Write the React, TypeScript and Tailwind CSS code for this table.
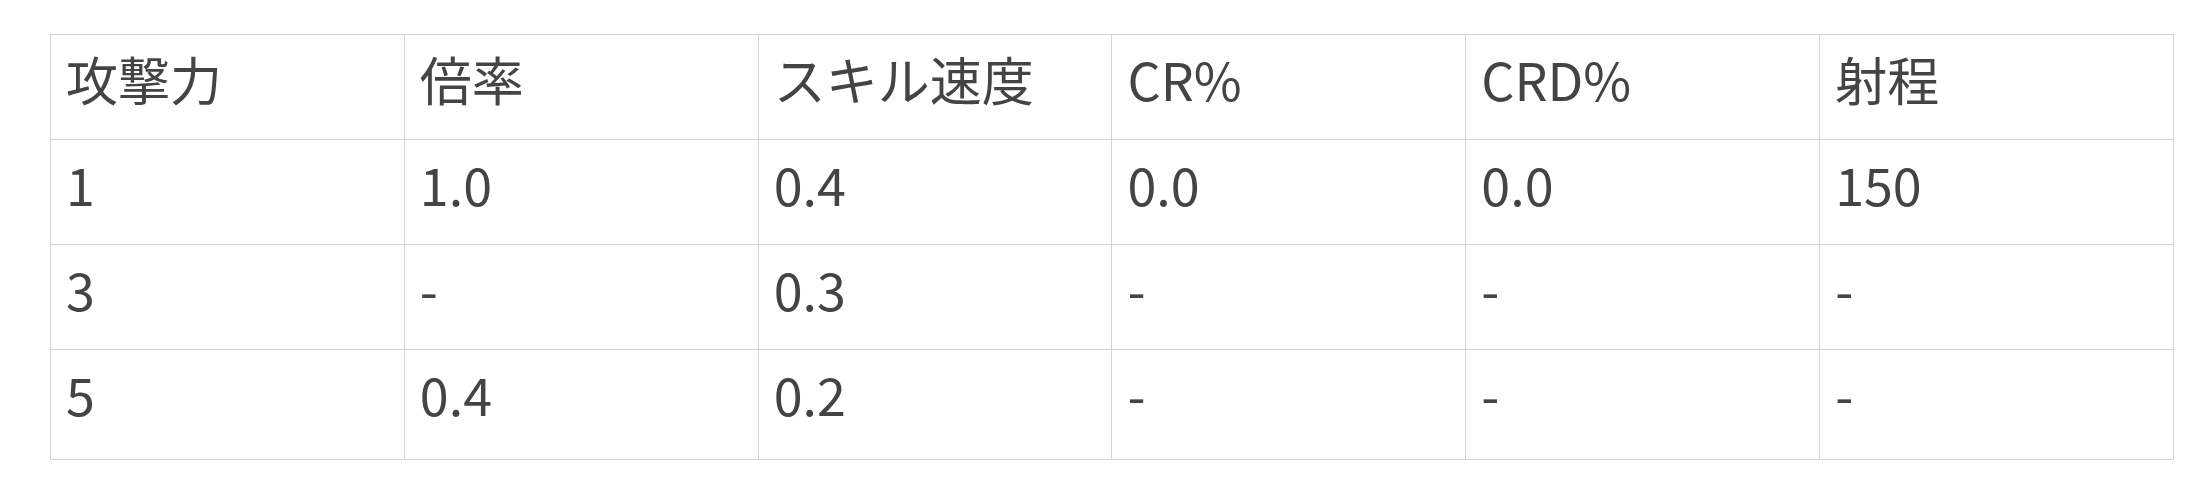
const headers = ['攻撃力', '倍率', 'スキル速度', 'CR%', 'CRD%', '射程'];

const rows = [
  ['1', '1.0', '0.4', '0.0', '0.0', '150'],
  ['3', '-', '0.3', '-', '-', '-'],
  ['5', '0.4', '0.2', '-', '-', '-'],
];

export default function App() {
  return (
    <div
      className="min-h-screen bg-white pl-[50px] pt-[34px]"
      style={{ fontFamily: '"Noto Sans CJK JP", "Noto Sans", sans-serif' }}
    >
      <table className="w-[2124px] table-fixed border-collapse text-[52px] leading-[52px] text-[#444]">
        <thead>
          <tr>
            {headers.map((h) => (
              <th
                key={h}
                className="h-[105px] border border-[#d4d4d4] px-[15px] pt-[18px] text-left align-top font-normal"
              >
                {h}
              </th>
            ))}
          </tr>
        </thead>
        <tbody>
          {rows.map((row, i) => (
            <tr key={i}>
              {row.map((cell, j) => (
                <td
                  key={j}
                  className={`border border-[#d4d4d4] px-[15px] pt-[18px] align-top ${
                    i === rows.length - 1 ? 'h-[110px]' : 'h-[105px]'
                  }`}
                >
                  {cell}
                </td>
              ))}
            </tr>
          ))}
        </tbody>
      </table>
    </div>
  );
}
